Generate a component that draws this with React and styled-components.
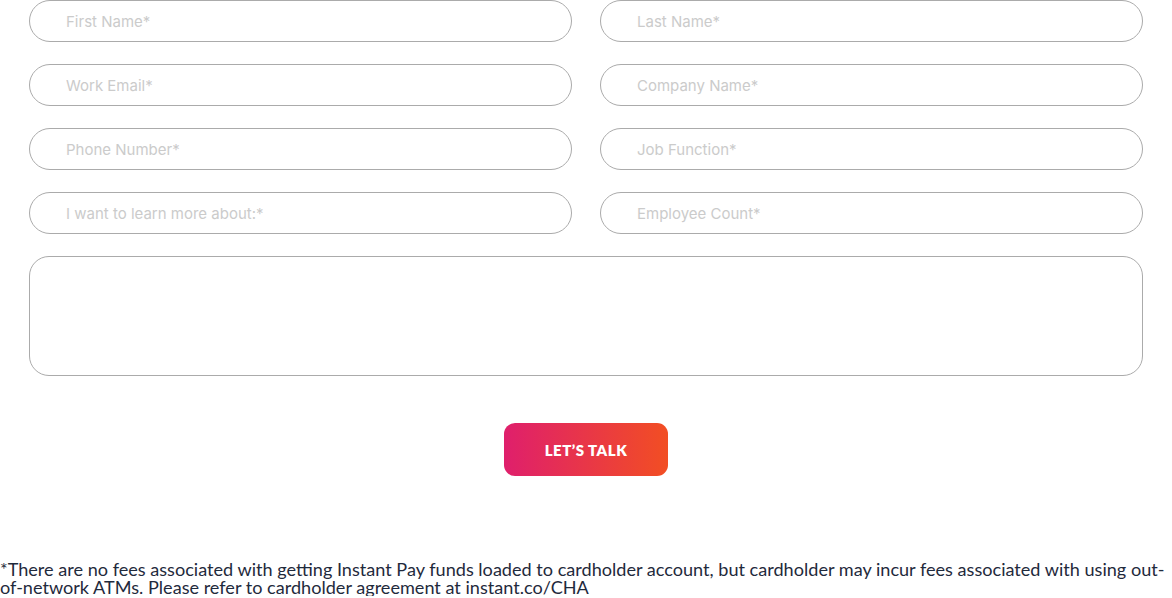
import React from "react";
import styled, { createGlobalStyle } from "styled-components";

const Global = createGlobalStyle`
  html, body { margin: 0; padding: 0; background: #fff; }
  * { box-sizing: border-box; }
`;

const Page = styled.div`
  width: 1172px;
  display: flex;
  flex-direction: column;
`;

const Form = styled.form`
  display: flex;
  flex-direction: column;
  padding: 0 29px;
`;

const Grid = styled.div`
  display: grid;
  grid-template-columns: 543px 543px;
  column-gap: 28px;
  row-gap: 22px;
`;

const Field = styled.input`
  height: 42px;
  width: 100%;
  border: 1px solid #ababab;
  border-radius: 21px;
  padding: 0 20px 0 36px;
  font-family: "Inter", "DejaVu Sans", sans-serif;
  font-size: 15px;
  color: #333;
  background: #fff;
  outline: none;
  &::placeholder { color: #cbcbcb; }
`;

const Message = styled.textarea`
  margin-top: 22px;
  height: 120px;
  width: 100%;
  border: 1px solid #ababab;
  border-radius: 20px;
  resize: none;
  outline: none;
  padding: 14px 36px;
  font-family: "Inter", sans-serif;
  font-size: 15px;
`;

const ButtonRow = styled.div`
  display: flex;
  justify-content: center;
  margin-top: 47px;
`;

const Submit = styled.button`
  width: 164px;
  height: 53px;
  border: none;
  border-radius: 11px;
  background: linear-gradient(90deg, #df1f6c 0%, #f24e23 100%);
  color: #fff;
  font-family: "Lato", "Liberation Sans", sans-serif;
  font-weight: 800;
  font-size: 15px;
  letter-spacing: 0.5px;
  cursor: pointer;
`;

const Disclaimer = styled.p`
  margin: 84px 0 0;
  font-family: "Lato", "Liberation Sans", sans-serif;
  font-size: 18.1px;
  line-height: 18px;
  color: #1f2a3c;
`;

const fields = [
  "First Name*",
  "Last Name*",
  "Work Email*",
  "Company Name*",
  "Phone Number*",
  "Job Function*",
  "I want to learn more about:*",
  "Employee Count*",
];

export default function App() {
  return (
    <Page>
      <Global />
      <Form onSubmit={(e) => e.preventDefault()}>
        <Grid>
          {fields.map((f) => (
            <Field key={f} placeholder={f} />
          ))}
        </Grid>
        <Message />
        <ButtonRow>
          <Submit type="submit">LET’S TALK</Submit>
        </ButtonRow>
      </Form>
      <Disclaimer>
        *There are no fees associated with getting Instant Pay funds loaded to cardholder account, but cardholder may incur fees associated with using out-of-network ATMs. Please refer to cardholder agreement at instant.co/CHA
      </Disclaimer>
    </Page>
  );
}
